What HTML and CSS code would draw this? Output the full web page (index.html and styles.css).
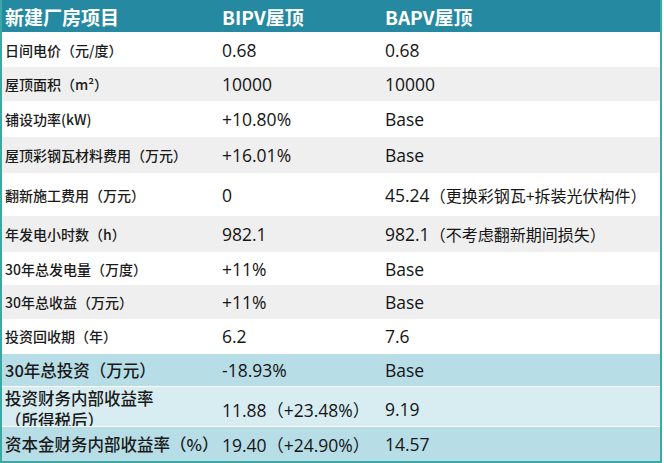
FILE: index.html
```html
<!DOCTYPE html>
<html lang="zh">
<head>
<meta charset="utf-8">
<link rel="stylesheet" href="styles.css">
</head>
<body>
<div class="table">
  <div class="row head"><div>新建厂房项目</div><div>BIPV屋顶</div><div>BAPV屋顶</div></div>
  <div class="row h35"><div class="lab">日间电价（元/度）</div><div>0.68</div><div>0.68</div></div>
  <div class="row gray h34"><div class="lab">屋顶面积（m²）</div><div>10000</div><div>10000</div></div>
  <div class="row h36"><div class="lab">铺设功率(kW)</div><div>+10.80%</div><div>Base</div></div>
  <div class="row gray h36"><div class="lab">屋顶彩钢瓦材料费用（万元）</div><div>+16.01%</div><div>Base</div></div>
  <div class="row h43"><div class="lab">翻新施工费用（万元）</div><div>0</div><div>45.24<span class="cj">（更换彩钢瓦+拆装光伏构件）</span></div></div>
  <div class="row gray h36"><div class="lab">年发电小时数（h）</div><div>982.1</div><div>982.1<span class="cj">（不考虑翻新期间损失）</span></div></div>
  <div class="row h33"><div class="lab">30年总发电量（万度）</div><div>+11%</div><div>Base</div></div>
  <div class="row gray h34"><div class="lab">30年总收益（万元）</div><div>+11%</div><div>Base</div></div>
  <div class="row h34"><div class="lab">投资回收期（年）</div><div>6.2</div><div>7.6</div></div>
  <div class="row blue h33"><div class="big">30年总投资（万元）</div><div>-18.93%</div><div>Base</div></div>
  <div class="row pale h40"><div class="big two">投资财务内部收益率<br>（所得税后）</div><div>11.88<span class="cp">（</span>+23.48%<span class="cp">）</span></div><div>9.19</div></div>
  <div class="row blue h35"><div class="big">资本金财务内部收益率（%）</div><div>19.40<span class="cp">（</span>+24.90%<span class="cp">）</span></div><div>14.57</div></div>
</div>
</body>
</html>
```
FILE: styles.css
```css
* { box-sizing: border-box; }
html, body { margin: 0; padding: 0; background: #ffffff; }
body {
  width: 664px;
  height: 463px;
  overflow: hidden;
  font-family: "Open Sans", "Noto Sans CJK SC", sans-serif;
  color: #151515;
}
.table {
  width: 662px;
  border-left: 2px solid #3aa9a3;
  border-right: 2px solid #3aa9a3;
  border-bottom: 2px solid #3aa9a3;
  display: flex;
  flex-direction: column;
}
.row {
  display: grid;
  grid-template-columns: 217px 163px 1fr;
  align-items: center;
  font-size: 17.5px;
  background: #ffffff;
}
.row > div {
  padding-left: 3px;
  white-space: nowrap;
}
.cj {
  font-size: 16px;
  font-family: "Noto Sans CJK SC", sans-serif;
}
.cp {
  font-family: "Noto Sans CJK SC", sans-serif;
  font-size: 17px;
}
.head {
  height: 32px;
  background: #2589a2;
  color: #ffffff;
  font-weight: bold;
  font-size: 19px;
  font-family: "Noto Sans CJK SC", sans-serif;
}
.lab {
  font-size: 14px;
  font-weight: 500;
  font-family: "Noto Sans CJK SC", sans-serif;
  color: #1a1a1a;
}
.big {
  font-size: 16.5px;
  font-weight: 500;
  font-family: "Noto Sans CJK SC", sans-serif;
  color: #1a1a1a;
}
.two { line-height: 22px; }
.gray { background: #efefef; }
.blue { background: #b7dde7; border-top: 1px solid #ffffff; }
.pale { background: #d7edf2; border-top: 1px solid #ffffff; }
.h33 { height: 33px; }
.h34 { height: 34px; }
.h35 { height: 35px; }
.h36 { height: 36px; }
.h40 { height: 40px; }
.h43 { height: 43px; }
```
